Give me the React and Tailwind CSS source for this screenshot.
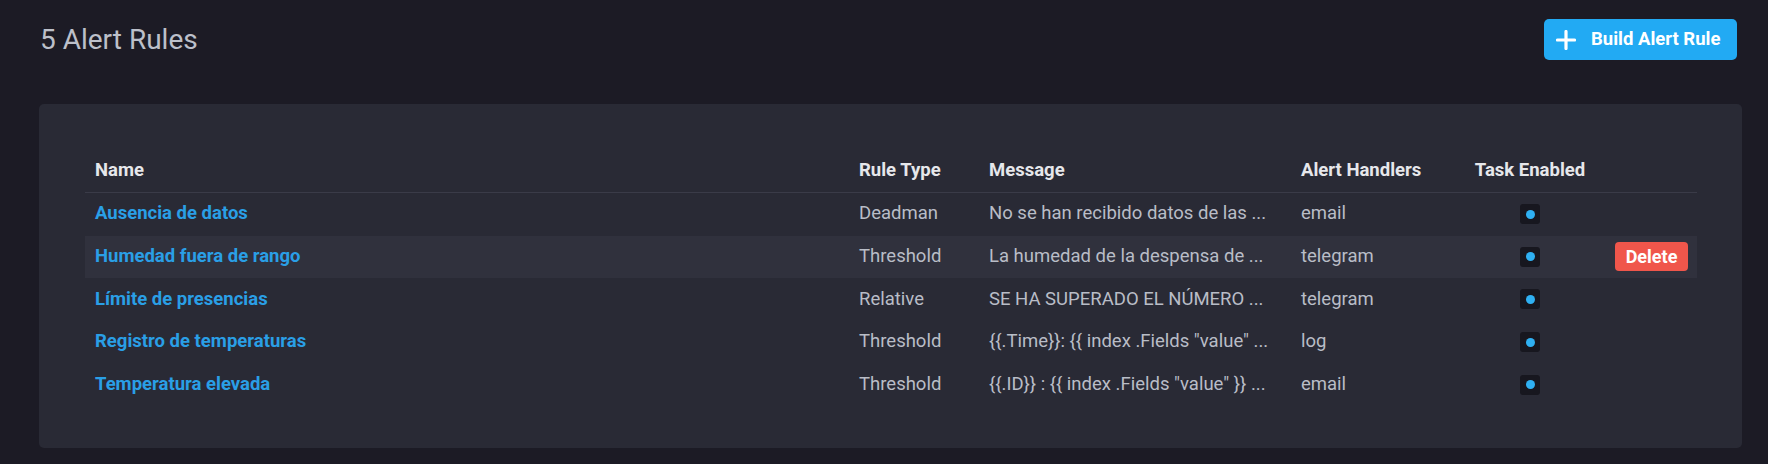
import React from "react";

const rows = [
  { name: "Ausencia de datos", type: "Deadman", msg: "No se han recibido datos de las ...", handler: "email" },
  { name: "Humedad fuera de rango", type: "Threshold", msg: "La humedad de la despensa de ...", handler: "telegram", hover: true },
  { name: "Límite de presencias", type: "Relative", msg: "SE HA SUPERADO EL NÚMERO ...", handler: "telegram" },
  { name: "Registro de temperaturas", type: "Threshold", msg: '{{.Time}}: {{ index .Fields "value" ...', handler: "log" },
  { name: "Temperatura elevada", type: "Threshold", msg: '{{.ID}} : {{ index .Fields "value" }} ...', handler: "email" },
];

const cols = "grid grid-cols-[764px_130px_312px_173px_132px_1fr]";

function Check() {
  return (
    <div className="w-[20px] h-[20px] rounded-[3px] bg-[#17171f] flex items-center justify-center">
      <div className="w-[9px] h-[9px] rounded-full bg-[#2fb0f2]" />
    </div>
  );
}

export default function App() {
  return (
    <div className="w-[1768px] h-[464px] bg-[#1c1b25] overflow-hidden" style={{ fontFamily: "Roboto, 'Liberation Sans', sans-serif" }}>
      <div className="flex items-center justify-between pl-[40px] pr-[31px] pt-[19px] h-[60px]">
        <h1 className="text-[28px] leading-none text-[#bcc0ca] font-normal">5 Alert Rules</h1>
        <button className="h-[41px] w-[193px] rounded-[5px] bg-[#22aaf3] flex items-center pl-[12px] gap-[15px] text-white font-bold text-[18.5px] whitespace-nowrap">
          <svg width="20" height="20" viewBox="0 0 20 20" className="shrink-0">
            <path d="M10 1.5v17M1.5 10h17" stroke="white" strokeWidth="3.2" strokeLinecap="round" />
          </svg>
          <span>Build Alert Rule</span>
        </button>
      </div>
      <div className="ml-[39px] mr-[26px] mt-[44px] h-[344px] rounded-[5px] bg-[#292a35] pt-[46px] pl-[46px] pr-[45px]">
        <div className={`${cols} h-[43px] items-center border-b border-[#3a3b48] text-[18.5px] font-bold text-[#e6e7eb] whitespace-nowrap`}>
          <div className="px-[10px]">Name</div>
          <div className="px-[10px]">Rule Type</div>
          <div className="px-[10px]">Message</div>
          <div className="px-[10px]">Alert Handlers</div>
          <div className="px-[10px] text-center">Task Enabled</div>
          <div />
        </div>
        {rows.map((r) => (
          <div key={r.name} className={`${cols} h-[42.6px] items-center text-[18.5px] whitespace-nowrap ${r.hover ? "bg-[#30313d]" : ""}`}>
            <div className="px-[10px] font-bold text-[#2a9fe6]">{r.name}</div>
            <div className="px-[10px] text-[#b9bdc7]">{r.type}</div>
            <div className="px-[10px] text-[#b9bdc7]">{r.msg}</div>
            <div className="px-[10px] text-[#b9bdc7]">{r.handler}</div>
            <div className="px-[10px] flex justify-center"><Check /></div>
            <div className="pr-[9px] flex justify-end">
              {r.hover && (
                <button className="h-[29px] w-[73px] rounded-[4px] bg-[#f0564b] text-white font-bold text-[18px]">Delete</button>
              )}
            </div>
          </div>
        ))}
      </div>
    </div>
  );
}
